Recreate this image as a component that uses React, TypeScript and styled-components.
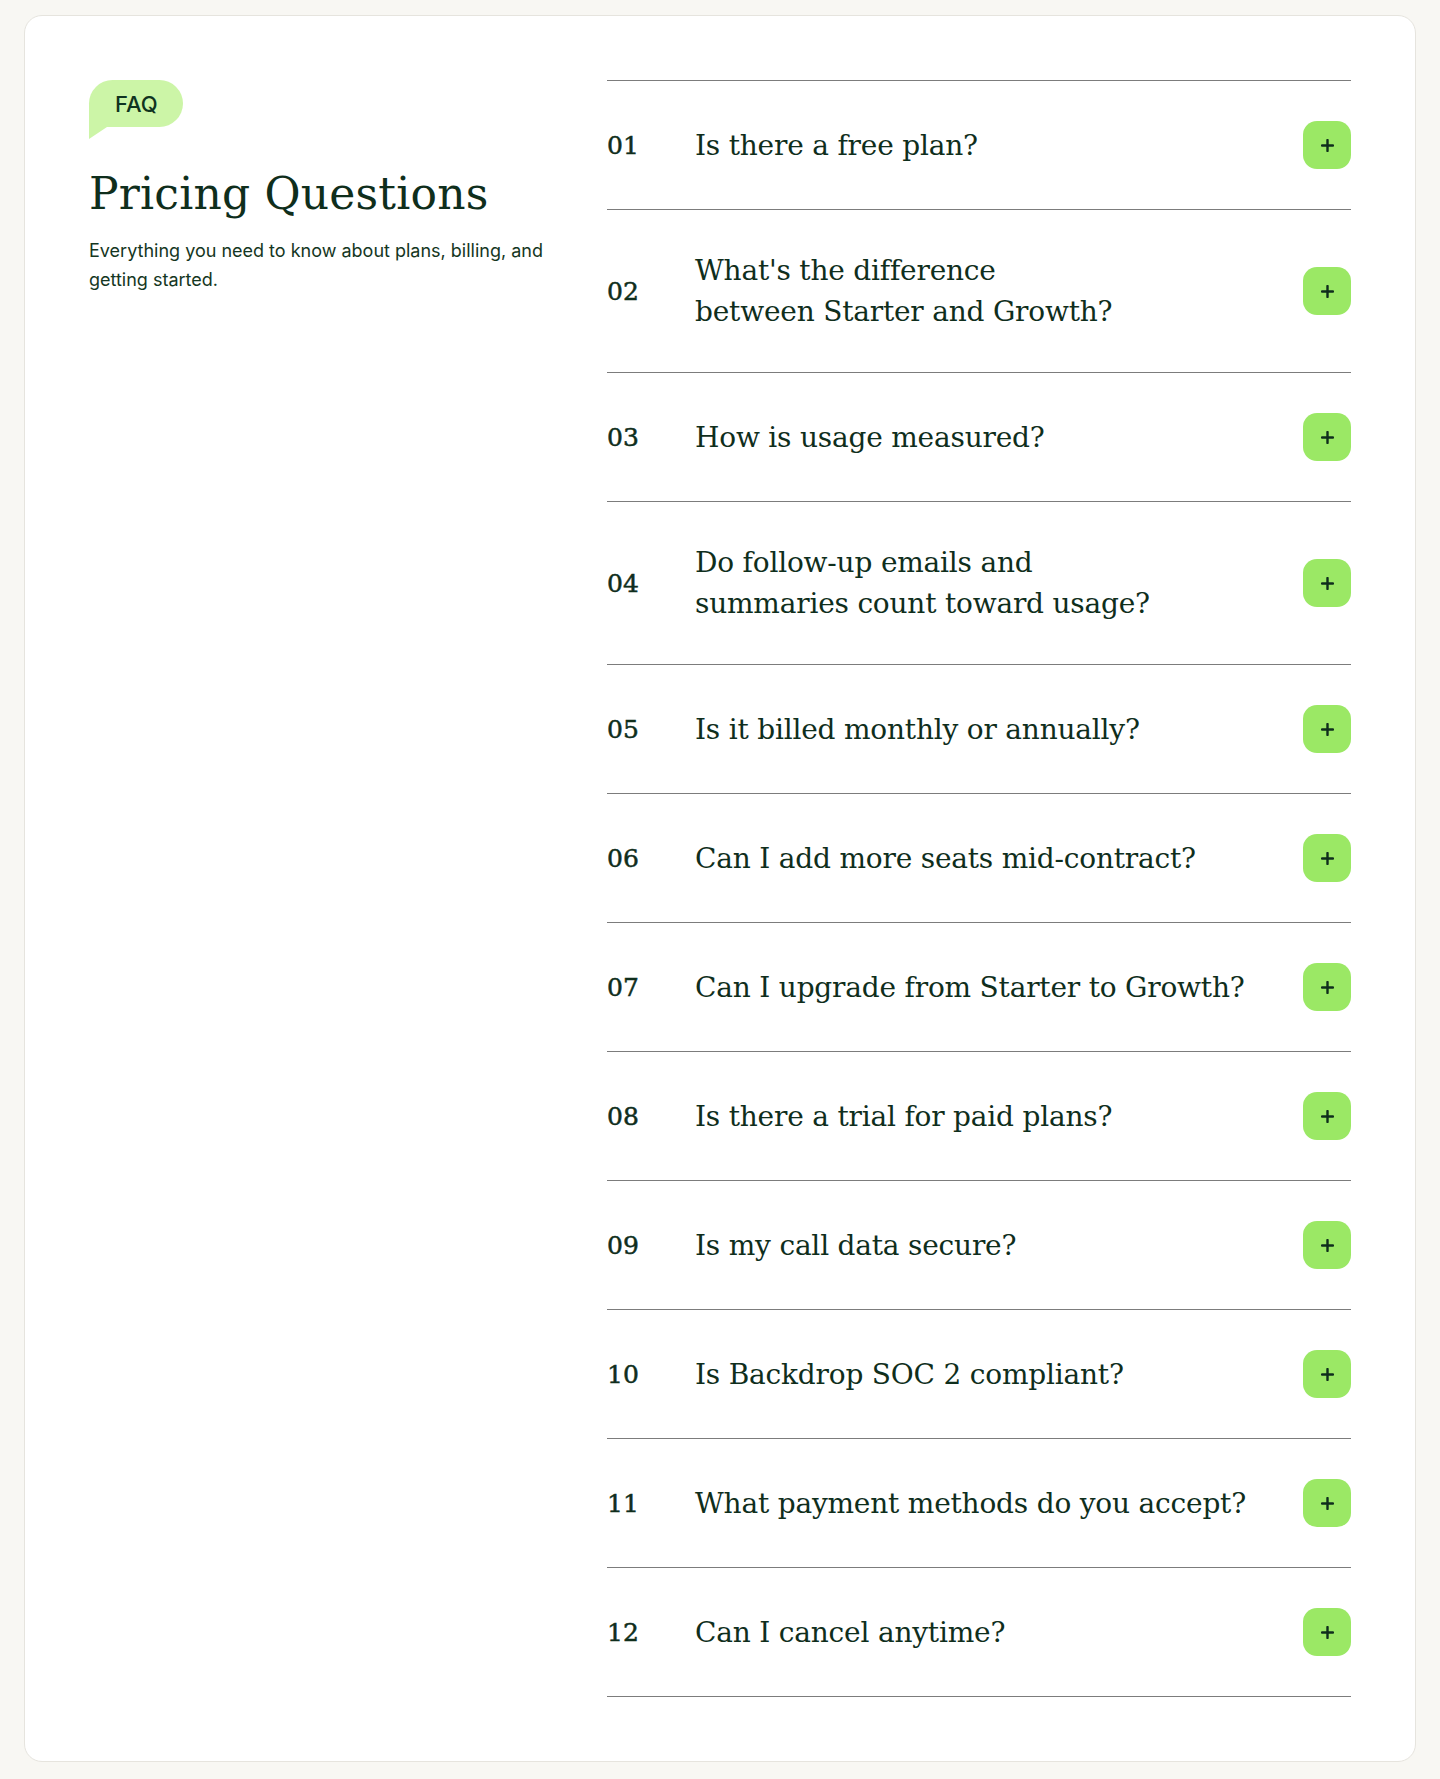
import styled, { createGlobalStyle } from 'styled-components';

interface Question {
  lines: string[];
}

const questions: Question[] = [
  { lines: ["Is there a free plan?"] },
  { lines: ["What's the difference", "between Starter and Growth?"] },
  { lines: ["How is usage measured?"] },
  { lines: ["Do follow-up emails and", "summaries count toward usage?"] },
  { lines: ["Is it billed monthly or annually?"] },
  { lines: ["Can I add more seats mid-contract?"] },
  { lines: ["Can I upgrade from Starter to Growth?"] },
  { lines: ["Is there a trial for paid plans?"] },
  { lines: ["Is my call data secure?"] },
  { lines: ["Is Backdrop SOC 2 compliant?"] },
  { lines: ["What payment methods do you accept?"] },
  { lines: ["Can I cancel anytime?"] }
];

const GlobalStyle = createGlobalStyle`
  * { box-sizing: border-box; }
  body {
    margin: 0;
    background: #f8f7f3;
    font-family: Inter, "Liberation Sans", sans-serif;
    color: #0f2e1c;
  }
`;

const Page = styled.div`
  padding: 15px 24px 17px 24px;
`;

const Card = styled.section`
  background: #ffffff;
  border: 1px solid #e6e4de;
  border-radius: 18px;
  padding: 64px;
  display: grid;
  grid-template-columns: 1fr 744px;
  gap: 56px;
  align-items: start;
`;

const Intro = styled.div`
  display: flex;
  flex-direction: column;
  align-items: flex-start;
`;

const Badge = styled.span`
  position: relative;
  display: inline-flex;
  align-items: center;
  height: 47px;
  padding: 0 25px 0 26px;
  background: #ccf5a7;
  border-radius: 24px 24px 24px 0;
  font-size: 22px;
  font-weight: 500;
  color: #0f3320;

  &::after {
    content: '';
    position: absolute;
    left: 0;
    top: 100%;
    width: 18px;
    height: 12px;
    background: #ccf5a7;
    clip-path: polygon(0 0, 100% 0, 0 100%);
  }
`;

const Title = styled.h2`
  margin: 41px 0 0;
  font-family: "DejaVu Serif", "Liberation Serif", serif;
  font-weight: 400;
  font-size: 44px;
  line-height: 52px;
  letter-spacing: 0.2px;
  color: #0f2e1c;
`;

const Lead = styled.p`
  margin: 16px 0 0;
  max-width: 470px;
  font-size: 18px;
  line-height: 29px;
  color: #143622;
`;

const List = styled.div`
  border-top: 1px solid #7c7c7c;
`;

const Row = styled.div`
  display: grid;
  grid-template-columns: 88px 1fr 48px;
  align-items: center;
  padding: 40px 0;
  border-bottom: 1px solid #7c7c7c;
`;

const Num = styled.span`
  font-family: "DejaVu Serif", "Liberation Serif", serif;
  font-size: 25px;
  font-weight: 500;
  color: #0f2e1c;
  -webkit-text-stroke: 0.5px #0f2e1c;
`;

const Ask = styled.span`
  font-family: "DejaVu Serif", "Liberation Serif", serif;
  font-size: 28px;
  line-height: 41px;
  color: #0f2e1c;
  letter-spacing: -0.2px;
`;

const Toggle = styled.button`
  width: 48px;
  height: 48px;
  border: none;
  border-radius: 14px;
  background: #9be865;
  display: flex;
  align-items: center;
  justify-content: center;
  cursor: pointer;
  padding: 0;
`;

const PlusIcon = () => (
  <svg width="13" height="13" viewBox="0 0 13 13" fill="none">
    <path d="M6.5 1v11M1 6.5h11" stroke="#0f2e1c" strokeWidth="2.4" strokeLinecap="round" />
  </svg>
);

const App = () => {
  return (
    <Page>
      <GlobalStyle />
      <Card>
        <Intro>
          <Badge>FAQ</Badge>
          <Title>Pricing Questions</Title>
          <Lead>Everything you need to know about plans, billing, and getting started.</Lead>
        </Intro>
        <List>
          {questions.map((q, index) => (
            <Row key={index}>
              <Num>{String(index + 1).padStart(2, '0')}</Num>
              <Ask>
                {q.lines.map((line, i) => (
                  <span key={i}>
                    {i > 0 && <br />}
                    {line}
                  </span>
                ))}
              </Ask>
              <Toggle aria-label="Expand">
                <PlusIcon />
              </Toggle>
            </Row>
          ))}
        </List>
      </Card>
    </Page>
  );
};

export default App;
